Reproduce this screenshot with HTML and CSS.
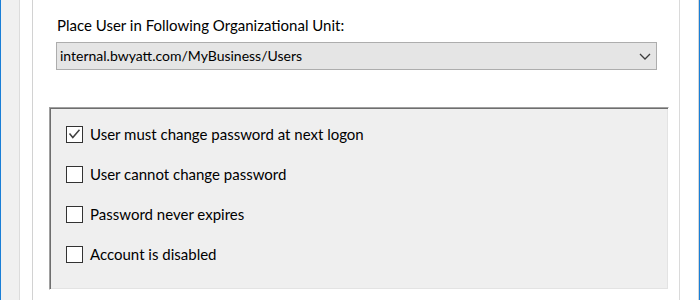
FILE: index.html
```html
<!DOCTYPE html>
<html>
<head>
<meta charset="utf-8">
<link rel="stylesheet" href="styles.css">
</head>
<body>
<div class="window">
  <div class="gutter-left"></div>
  <div class="tab">
    <div class="panel">
      <div class="ou-label">Place User in Following Organizational Unit:</div>
      <div class="combo">
        <span class="combo-text">internal.bwyatt.com/MyBusiness/Users</span>
        <svg class="chevron" width="12" height="7" viewBox="0 0 12 7"><path d="M1 1 L6 6 L11 1" fill="none" stroke="#3c3c3c" stroke-width="1.3"/></svg>
      </div>
      <div class="options">
        <label class="option">
          <span class="box checked"><svg width="15" height="15" viewBox="0 0 15 15"><path d="M2.5 6.5 L5.8 10.5 L12.5 2.8" fill="none" stroke="#404040" stroke-width="1.5"/></svg></span>
          <span class="option-text">User must change password at next logon</span>
        </label>
        <label class="option">
          <span class="box"></span>
          <span class="option-text">User cannot change password</span>
        </label>
        <label class="option">
          <span class="box"></span>
          <span class="option-text">Password never expires</span>
        </label>
        <label class="option">
          <span class="box"></span>
          <span class="option-text">Account is disabled</span>
        </label>
      </div>
    </div>
  </div>
  <div class="gutter-right"></div>
</div>
</body>
</html>
```
FILE: styles.css
```css
html, body {
  margin: 0;
  padding: 0;
}
body {
  width: 700px;
  height: 300px;
  overflow: hidden;
  font-family: Lato, "Liberation Sans", sans-serif;
  font-size: 15px;
  color: #000;
}
.window {
  box-sizing: border-box;
  width: 700px;
  height: 300px;
  display: flex;
  background: #f0f0f0;
  border-left: 1px solid #1a7fd7;
  border-right: 1px solid #1a7fd7;
}
.gutter-left {
  width: 18px;
  flex: none;
}
.gutter-right {
  width: 10px;
  flex: none;
}
.tab {
  flex: none;
  width: 658px;
  background: #fff;
  border-left: 1px solid #dcdcdc;
  border-right: 1px solid #d6d6d6;
  padding: 0 8px 0 12px;
  box-sizing: content-box;
}
.panel {
  box-sizing: border-box;
  width: 648px;
  height: 300px;
  background: #fff;
  border-left: 1px solid #d2d2d2;
  border-right: 1px solid #dadada;
  padding-top: 16px;
}
.ou-label {
  margin-left: 24px;
  line-height: 18px;
  height: 18px;
}
.combo {
  box-sizing: border-box;
  margin: 8px 0 0 23px;
  width: 601px;
  height: 28px;
  background: #e5e5e5;
  border: 1px solid #adadad;
  padding: 4px 5px 4px 3px;
  display: flex;
  align-items: center;
  justify-content: space-between;
  font-size: 14px;
  line-height: 18px;
}
.chevron {
  display: block;
  margin-top: 1px;
}
.options {
  box-sizing: border-box;
  margin: 37px 0 0 16px;
  width: 620px;
  height: 183px;
  background: #efefef;
  border-top: 1px solid #a0a0a0;
  border-left: 1px solid #a0a0a0;
  border-bottom: 1px solid #fff;
  border-right: 1px solid #fff;
  box-shadow: inset 1px 1px 0 #6e6e6e, inset -1px -1px 0 #e3e3e3;
  padding: 17px 0 0 16px;
  display: flex;
  flex-direction: column;
  gap: 22px;
}
.option {
  display: flex;
  align-items: center;
  height: 18px;
  line-height: 18px;
}
.box {
  box-sizing: border-box;
  width: 17px;
  height: 17px;
  border: 1px solid #333;
  background: #fff;
  flex: none;
  display: flex;
  align-items: center;
  justify-content: center;
}
.box svg {
  display: block;
}
.option-text {
  margin-left: 7px;
}
```
